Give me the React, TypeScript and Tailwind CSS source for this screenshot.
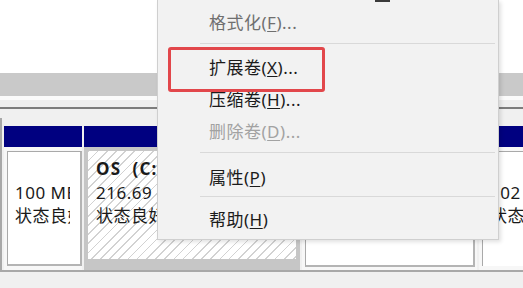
import React from 'react';

const font = { fontFamily: '"Noto Sans", "Noto Sans CJK SC", sans-serif' };

const MenuItem: React.FC<{ label: string; hotkey: string; dots?: boolean; tone?: string; className?: string }> = ({
  label,
  hotkey,
  dots = true,
  tone = 'text-[#1b1b1b]',
  className = '',
}) => (
  <div className={`h-[32px] flex items-center pl-[51px] text-[17px] tracking-[0.5px] ${tone} ${className}`}>
    <span>
      {label}(<u className="underline-offset-2">{hotkey}</u>){dots ? '...' : ''}
    </span>
  </div>
);

const Separator: React.FC<{ className?: string }> = ({ className = '' }) => (
  <div className={`h-px bg-[#d9d9d9] ml-[42px] mr-[3px] ${className}`} />
);

const PartText: React.FC<{ lines: React.ReactNode[]; clip?: string }> = ({ lines, clip = '' }) => (
  <div className={`overflow-hidden whitespace-pre text-[17px] tracking-[0.5px] leading-[23.5px] text-[#1a1a1a] ${clip}`}>
    {lines.map((l, i) => (
      <div key={i}>{l}</div>
    ))}
  </div>
);

export default function App() {
  return (
    <div className="relative w-[523px] h-[288px] overflow-hidden bg-[#f0f0f0]" style={font}>
      {/* volume list pane */}
      <div className="h-[73px] bg-white" />
      <div className="h-[23px] bg-[#c9c9c9]" />
      <div className="h-[4px] bg-[#fafafa]" />
      <div className="h-[7px] bg-[#efefef]" />
      <div className="h-[2px] bg-[#7d7d7d]" />

      {/* graphical disk pane */}
      <div className="pt-[9px]">
        <div className="flex gap-[2px] border-l-2 border-b-2 border-[#a8a8a8] pt-[8px] pl-[2px] h-[154px]">
          {/* EFI */}
          <div className="w-[78px] flex flex-col shrink-0">
            <div className="h-[21px] bg-[#000080]" />
            <div className="flex-1 bg-[#f7f7f7] pt-[4px] pl-[3px] pb-[3px]">
              <div className="h-[115px] bg-white border-l border-t border-[#a9a9a9] border-r-2 border-b-2 border-r-[#b4b4b4] border-b-[#b4b4b4] pl-[7px] pt-[5px]">
                <PartText clip="w-[55px]" lines={['\u00a0', '100 MB', '状态良好 (EFI 系统分区)']} />
              </div>
            </div>
          </div>

          {/* OS (C:) selected */}
          <div className="w-[216px] flex flex-col shrink-0">
            <div className="h-[21px] bg-[#000080]" />
            <div className="flex-1 bg-[#c6c6c6] pt-[4px] px-[4px] pb-[7px]">
              <div className="h-[108px] bg-white bg-[image:repeating-linear-gradient(135deg,#d2d2d2_0px,#d2d2d2_1.2px,#ffffff_1.2px,#ffffff_6.5px)] pl-[8px] pt-[6px]">
                <PartText
                  lines={[
                    <span className="font-bold tracking-[1.2px]">OS  (C:)</span>,
                    '216.69 GB NTFS',
                    '状态良好 (启动, 页面文件, 故障转储, 基本数据分区)',
                  ]}
                />
              </div>
            </div>
          </div>

          {/* data */}
          <div className="w-[175px] flex flex-col shrink-0">
            <div className="h-[21px] bg-[#000080]" />
            <div className="flex-1 bg-[#f7f7f7] pt-[4px] pl-[3px] pr-[2px] pb-[3px]">
              <div className="h-[116px] bg-white border-l border-t border-[#a9a9a9] border-r-2 border-b-2 border-r-[#b4b4b4] border-b-[#b4b4b4]" />
            </div>
          </div>

          {/* recovery */}
          <div className="flex-1 flex flex-col">
            <div className="h-[21px] bg-[#000080]" />
            <div className="flex-1 bg-[#f7f7f7] pt-[4px] pl-[3px] pb-[3px]">
              <div className="h-[115px] bg-white border-l border-t border-[#a9a9a9] pl-[7px] pt-[5px]">
                <PartText lines={['\u00a0', '102 MB', '状态良好 (恢复分区)']} />
              </div>
            </div>
          </div>
        </div>
      </div>

      {/* context menu */}
      <div className="absolute left-[157px] top-0 w-[342px] h-[240px] bg-[#f2f2f2] border border-t-0 border-[#cfcfcf] shadow-[2px_2px_4px_rgba(0,0,0,0.12)]">
        <div className="h-[2px] w-[15px] ml-[217px] bg-[#3a3a3a]" />
        <MenuItem label="格式化" hotkey="F" tone="text-[#6f6f6f]" className="mt-[5px]" />
        <Separator className="mt-[4px]" />
        <MenuItem label="扩展卷" hotkey="X" className="mt-[8px]" />
        <MenuItem label="压缩卷" hotkey="H" />
        <MenuItem label="删除卷" hotkey="D" tone="text-[#a2a2a2]" />
        <Separator className="mt-[4px]" />
        <MenuItem label="属性" hotkey="P" dots={false} className="mt-[9px]" />
        <Separator className="mt-[2px]" />
        <MenuItem label="帮助" hotkey="H" dots={false} className="mt-[7px]" />

        {/* highlight box */}
        <div className="absolute left-[10px] top-[47px] w-[157px] h-[45px] border-[3px] border-[#e2474b] rounded-[3px]" />
      </div>
    </div>
  );
}
